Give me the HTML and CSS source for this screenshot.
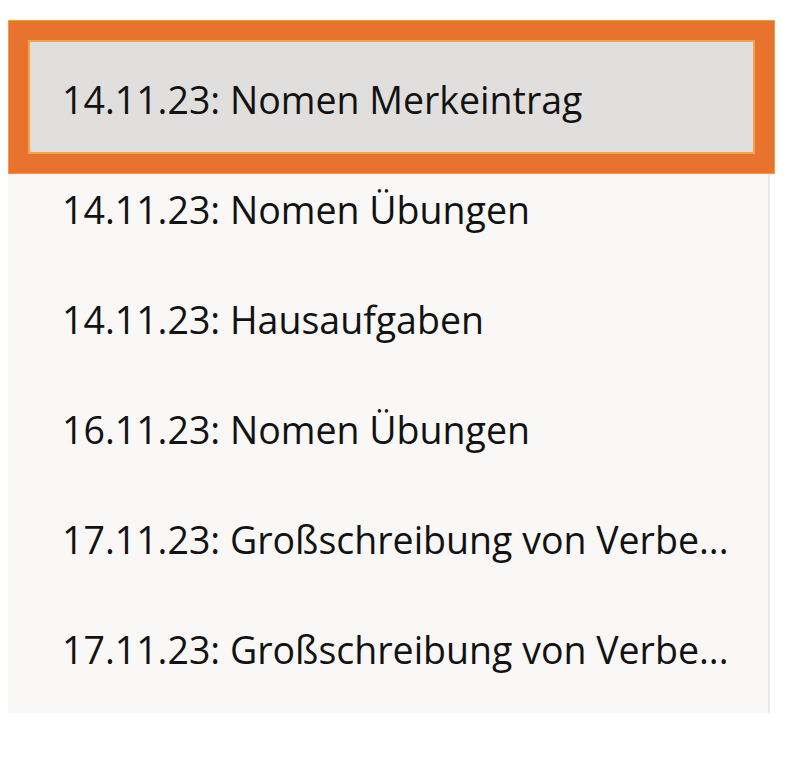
FILE: index.html
```html
<!DOCTYPE html>
<html lang="de">
<head>
    <meta charset="UTF-8">
    <meta name="viewport" content="width=device-width, initial-scale=1.0">
    <title>Einträge</title>
    <link rel="stylesheet" href="styles.css">
</head>
<body>
    <ul class="entries">
        <li class="entry selected">14.11.23: Nomen Merkeintrag</li>
        <li class="entry">14.11.23: Nomen Übungen</li>
        <li class="entry">14.11.23: Hausaufgaben</li>
        <li class="entry">16.11.23: Nomen Übungen</li>
        <li class="entry">17.11.23: Großschreibung von Verbe...</li>
        <li class="entry">17.11.23: Großschreibung von Verbe...</li>
    </ul>
</body>
</html>
```

FILE: styles.css
```css
body {
    margin: 0;
    padding: 31px 0 0 8px;
    background: #ffffff;
    font-family: "Open Sans", "Noto Sans", sans-serif;
    color: #121212;
}
.entries {
    list-style: none;
    margin: 0;
    padding: 11px 0 11px 0;
    width: 760px;
    background: #f9f8f7;
    border-right: 2px solid #e9e8e7;
}
.entry {
    height: 110px;
    margin: 0 15px 0 22px;
    padding: 4px 0 0 32px;
    box-sizing: border-box;
    display: flex;
    align-items: center;
    font-size: 37.5px;
    white-space: nowrap;
    overflow: hidden;
    text-overflow: ellipsis;
}
.selected {
    background: #e0dfdd;
    outline: 2px solid #f6a347;
    box-shadow: 0 0 0 2px #f6a347, 0 0 0 21px #e8732f, 0 0 0 22px #f39a3c;
    position: relative;
}
```
